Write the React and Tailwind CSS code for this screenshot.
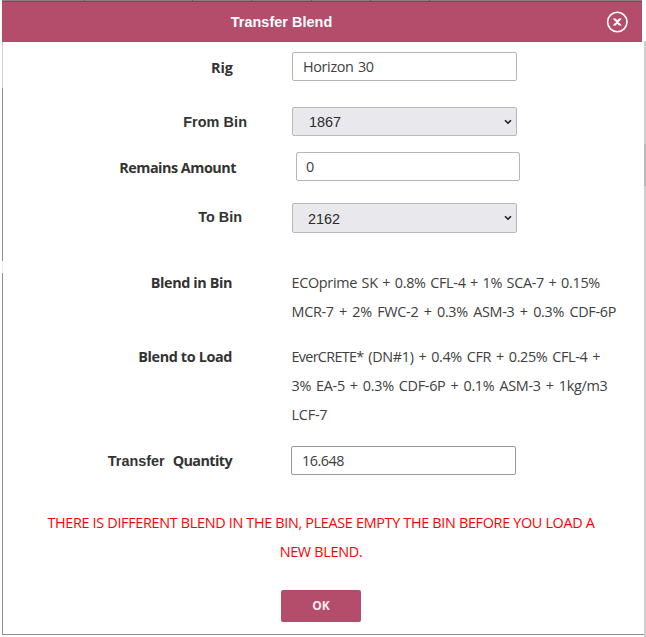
import React from "react";

const sans = "font-['Open_Sans','Noto_Sans',sans-serif]";
const arial = "font-['Liberation_Sans',Arial,sans-serif]";

function Row({ className, labelClass, label, children }) {
  return (
    <div className={`flex items-start ${className}`}>
      <div className={`shrink-0 whitespace-nowrap text-right text-[14.4px] font-bold leading-[29px] text-[#333333] ${labelClass}`}>
        {label}
      </div>
      {children}
    </div>
  );
}

function Field({ className, text, textClass }) {
  return (
    <div className={`flex h-[29px] items-center rounded-[2px] border bg-white text-[14.4px] text-[#404040] ${sans} ${className}`}>
      <span className={textClass}>{text}</span>
    </div>
  );
}

function Select({ className, value }) {
  return (
    <div className={`flex w-[225px] items-center justify-between rounded-[2px] border border-[#b8b8bb] bg-[#e9e9ed] pr-[4px] text-[14.4px] text-[#2b2b2b] ${arial} ${className}`}>
      <span className="pt-[3px]">{value}</span>
      <svg width="8" height="6" viewBox="0 0 8 6" fill="none">
        <path d="M1 1.2L4 4.2L7 1.2" stroke="#1c1c1c" strokeWidth="1.6" />
      </svg>
    </div>
  );
}

function Line({ className = "", children }) {
  return <div className={`whitespace-nowrap ${className}`}>{children}</div>;
}

export default function App() {
  return (
    <div className="flex h-[637px] w-[646px] overflow-hidden bg-white">
      <div className="flex w-[642px] shrink-0 flex-col pl-[2px]">
        <div className="flex h-[1px] shrink-0 bg-[#8d7f83]">
          <div className="ml-[82px] w-px bg-[#65595d]" />
          <div className="ml-[107px] w-px bg-[#65595d]" />
          <div className="ml-[58px] w-px bg-[#65595d]" />
          <div className="ml-[59px] w-px bg-[#65595d]" />
          <div className="ml-[58px] w-px bg-[#65595d]" />
          <div className="ml-[58px] w-px bg-[#65595d]" />
        </div>
        <header className="flex h-[41px] shrink-0 items-center border-t border-[#7d4458] bg-[#b34d6b]">
          <h1 className={`w-[559px] whitespace-nowrap pt-[2px] text-center text-[14.4px] font-bold tracking-[0.05px] text-white ${arial}`}>
            Transfer Blend
          </h1>
          <button className="ml-[45px]" aria-label="Close">
            <svg className="block" width="23" height="22" viewBox="0 0 23 22" fill="none" stroke="#fff">
              <circle cx="11.3" cy="11" r="9.7" strokeWidth="1.6" />
              <path d="M8 8.1H9.4L14.6 13.9H13.2Z M14.6 8.1H13.2L8 13.9H9.4Z" fill="#fff" strokeWidth="1.1" />
            </svg>
          </button>
        </header>
        <div className="flex h-[592px] shrink-0">
          <div className="flex w-px shrink-0 flex-col">
            <div className="h-[46px] bg-[#d4d4d4]" />
            <div className="h-[173px] bg-[#8f8f8f]" />
            <div className="h-[12px] bg-[#efefef]" />
            <div className="h-[361px] bg-[#8f8f8f]" />
          </div>
          <main className={`w-[639px] shrink-0 ${sans}`}>
            <Row className="h-[39px] pt-[10px]" labelClass="w-[230px] pt-px" label="Rig">
              <Field className="ml-[59px] w-[225px] border-[#b5b5b5] pl-[10px]" textClass="pt-px tracking-[-0.35px] [word-spacing:1px]" text="Horizon 30" />
            </Row>
            <Row className="mt-[26px] h-[29px]" labelClass={`w-[244px] tracking-[0.08px] pt-px ${arial}`} label="From Bin">
              <Select className="ml-[45px] h-[29px] pl-[16px]" value="1867" />
            </Row>
            <Row className="mt-[16px] h-[29px]" labelClass="w-[233px] pt-px tracking-[-0.5px]" label="Remains Amount">
              <Field className="ml-[60px] w-[224px] border-[#b5b5b5] pl-[9px]" textClass="pt-px" text="0" />
            </Row>
            <Row className="mt-[22px] h-[30px]" labelClass={`w-[239px] ${arial}`} label="To Bin">
              <Select className="ml-[50px] h-[30px] pl-[15px]" value="2162" />
            </Row>
            <Row className="mt-[35px]" labelClass="w-[229px] tracking-[-0.4px]" label="Blend in Bin">
              <div className="ml-[59.5px] text-[14.4px] leading-[29px] text-[#404040]">
                <Line className="tracking-[-0.3px] [word-spacing:1.1px]">ECOprime SK + 0.8% CFL-4 + 1% SCA-7 + 0.15%</Line>
                <Line className="tracking-[-0.3px] [word-spacing:1.9px]">MCR-7 + 2% FWC-2 + 0.3% ASM-3 + 0.3% CDF-6P</Line>
              </div>
            </Row>
            <Row className="mt-[16px]" labelClass="w-[229px] tracking-[-0.37px]" label="Blend to Load">
              <div className="ml-[59.5px] text-[14.4px] leading-[29px] text-[#404040]">
                <Line className="[word-spacing:1.5px]"><span className="tracking-[-0.7px]">EverCRETE*</span><span className="tracking-[-0.35px]"> (DN#1) + 0.4% CFR + 0.25% CFL-4 +</span></Line>
                <Line className="tracking-[-0.3px] [word-spacing:1.6px]">3% EA-5 + 0.3% CDF-6P + 0.1% ASM-3 + 1kg/m3</Line>
                <Line className="tracking-[-0.2px]">LCF-7</Line>
              </div>
            </Row>
            <Row
              className="mt-[17px]"
              labelClass="w-[229px]"
              label={<><span className={`mr-[8px] ${arial}`}>Transfer</span><span className="tracking-[-0.6px]">Quantity</span></>}
            >
              <Field className="ml-[59px] w-[225px] border-[#999999] pl-[10px]" textClass="tracking-[-0.5px]" text="16.648" />
            </Row>
            <div className="mt-[32px] w-[636px] text-center text-[14.4px] leading-[29px] text-[#ff0000]">
              <Line className="tracking-[-0.32px]">THERE IS DIFFERENT BLEND IN THE BIN, PLEASE EMPTY THE BIN BEFORE YOU LOAD A</Line>
              <Line className="tracking-[-0.3px]">NEW BLEND.</Line>
            </div>
            <button className="ml-[278px] mt-[24px] flex h-[32px] w-[80px] items-center justify-center rounded-[2px] bg-[#b34d6b] text-[12px] font-bold text-[#fbe9ef]">
              OK
            </button>
          </main>
        </div>
        <div className="h-[1px] w-[643px] shrink-0 bg-[#8f8f8f]" />
      </div>
      <div className="ml-[2px] mt-[41px] flex w-[2px] shrink-0 flex-col">
        <div className="h-[103px] bg-[#cfcfcf]" />
        <div className="h-[42px] bg-[#b9b9b9]" />
        <div className="h-[451px] bg-[#cfcfcf]" />
      </div>
    </div>
  );
}
